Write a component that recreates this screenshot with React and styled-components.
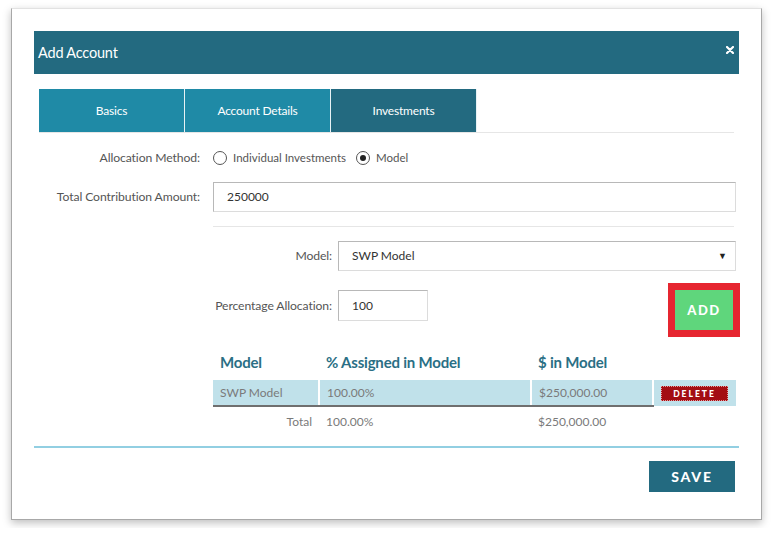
import styled, { createGlobalStyle } from 'styled-components';

const GlobalStyle = createGlobalStyle`
	html, body {
		margin: 0;
		background: #ffffff;
	}
	body {
		padding: 8px 11px;
		font-family: Lato, 'Open Sans', sans-serif;
		color: #555;
	}
`;

const Card = styled.div`
	width: 751px;
	height: 512px;
	box-sizing: border-box;
	padding: 22px 22px 0;
	background: #fff;
	border: 1px solid #a8a8a8;
	border-top-color: #e2e2e2;
	box-shadow: 0 3px 8px rgba(0, 0, 0, 0.25);
	display: flex;
	flex-direction: column;
`;

const Header = styled.div`
	height: 43px;
	background: #236a80;
	display: flex;
	align-items: center;
	justify-content: space-between;
	padding: 0 5px 0 4px;
	color: #fff;
	font-size: 14.5px;
	letter-spacing: -0.2px;
`;

const Close = styled.span`
	display: flex;
	margin-top: -6px;
`;

const Body = styled.div`
	padding: 15px 5px 0;
`;

const TabBar = styled.div`
	display: flex;
	border-bottom: 1px solid #e6e6e6;
`;

const Tab = styled.div`
	width: 145px;
	height: 43px;
	display: flex;
	align-items: center;
	justify-content: center;
	background: ${({ $active }) => ($active ? '#236a80' : '#1f8aa6')};
	color: #fff;
	font-size: 12px;
	border-right: 1px solid #e8f2f5;
	letter-spacing: -0.2px;
`;

const Row = styled.div`
	display: flex;
	align-items: ${({ $align }) => $align || 'center'};
	gap: ${({ $gap }) => $gap || 13}px;
	margin-top: ${({ $top }) => $top || 0}px;
`;

const Label = styled.div`
	width: ${({ $w }) => $w || 161}px;
	line-height: 31px;
	text-align: right;
	font-size: 12.2px;
	color: #555;
	flex-shrink: 0;
	letter-spacing: -0.1px;
`;

const RadioGroup = styled.div`
	display: flex;
	align-items: center;
	gap: 6px;
	font-size: 11.5px;
	color: #555;
`;

const Radio = styled.span`
	width: 12px;
	height: 12px;
	border-radius: 50%;
	border: 1.5px solid #555;
	display: inline-flex;
	align-items: center;
	justify-content: center;
	margin-left: ${({ $gapLeft }) => $gapLeft || 0}px;
	&::after {
		content: '';
		width: 6px;
		height: 6px;
		border-radius: 50%;
		background: ${({ $checked }) => ($checked ? '#222' : 'transparent')};
	}
`;

const Input = styled.div`
	box-sizing: border-box;
	width: ${({ $w }) => $w || 523}px;
	height: ${({ $h }) => $h || 30}px;
	flex-shrink: 0;
	border: 1px solid #dcdcdc;
	border-top-color: #b8b8b8;
	border-left-color: #b8b8b8;
	padding: 0 13px;
	display: flex;
	align-items: center;
	justify-content: space-between;
	font-size: 12px;
	color: #333;
`;

const Caret = styled.span`
	font-size: 9px;
	color: #222;
	margin-right: -5px;
`;

const Section = styled.div`
	margin-left: 174px;
	border-top: 1px solid #e6e6e6;
	margin-top: 14px;
	padding-top: 13px;
`;

const AddButton = styled.button`
	margin-left: auto;
	margin-right: 1px;
	width: 58px;
	height: 40px;
	border: none;
	background: #5fd67c;
	outline: 7px solid #e62630;
	color: #fff;
	font-family: Lato, sans-serif;
	font-weight: 900;
	font-size: 13px;
	letter-spacing: 1.5px;
`;

const Table = styled.table`
	margin-top: 23px;
	width: 523px;
	border-collapse: collapse;
	font-size: 12px;
`;

const Th = styled.th`
	text-align: left;
	font-weight: 700;
	font-size: 15px;
	color: #2a6f85;
	padding: 0 7px 9px;
	letter-spacing: -0.2px;
`;

const Td = styled.td`
	height: ${({ $h }) => $h || 25}px;
	padding: 0 7px;
	color: #7a7a7a;
	background: ${({ $fill }) => ($fill ? '#c0e1ea' : 'transparent')};
	border-left: ${({ $fill }) => ($fill ? '2px solid #fff' : 'none')};
	border-bottom: ${({ $line }) => ($line ? '2px solid #6f6f6f' : 'none')};
	text-align: ${({ $right }) => ($right ? 'right' : 'left')};
	&:first-child {
		border-left: none;
	}
`;

const DeleteButton = styled.span`
	display: inline-flex;
	align-items: center;
	justify-content: center;
	width: 67px;
	height: 15px;
	box-sizing: border-box;
	background: #a30d12;
	border: 1px dotted #e89a9a;
	color: #fff;
	font-weight: 900;
	font-size: 8.5px;
	letter-spacing: 2px;
`;

const Footer = styled.div`
	border-top: 2px solid #92cfe2;
	display: flex;
	justify-content: flex-end;
	padding: 13px 4px 0 0;
	margin-top: 10px;
`;

const SaveButton = styled.button`
	width: 86px;
	height: 31px;
	border: none;
	background: #236a80;
	color: #fff;
	font-family: Lato, sans-serif;
	font-weight: 900;
	font-size: 14px;
	letter-spacing: 1.8px;
`;

const CloseIcon = () => (
	<svg width="8" height="8" viewBox="0 0 8 8">
		<path d="M1 1 L7 7 M7 1 L1 7" stroke="#fff" strokeWidth="2.2" strokeLinecap="round" />
	</svg>
);

export default function App() {
	return (
		<>
			<GlobalStyle />
			<Card>
				<Header>
					Add Account
					<Close>
						<CloseIcon />
					</Close>
				</Header>
				<Body>
					<TabBar>
						<Tab>Basics</Tab>
						<Tab>Account Details</Tab>
						<Tab $active>Investments</Tab>
					</TabBar>
					<Row $top={9}>
						<Label>Allocation Method:</Label>
						<RadioGroup>
							<Radio />
							Individual Investments
							<Radio $checked $gapLeft={4} />
							Model
						</RadioGroup>
					</Row>
					<Row $top={8}>
						<Label>Total Contribution Amount:</Label>
						<Input>250000</Input>
					</Row>
					<Section>
						<Row $gap={6}>
							<Label $w={119}>Model:</Label>
							<Input $w={398}>
								SWP Model
								<Caret>▼</Caret>
							</Input>
						</Row>
						<Row $gap={6} $top={19} $align="flex-start">
							<Label $w={119}>Percentage Allocation:</Label>
							<Input $w={90} $h={31}>100</Input>
							<AddButton>ADD</AddButton>
						</Row>
						<Table>
							<colgroup>
								<col style={{ width: 106 }} />
								<col style={{ width: 212 }} />
								<col style={{ width: 122 }} />
								<col style={{ width: 83 }} />
							</colgroup>
							<thead>
								<tr>
									<Th>Model</Th>
									<Th>% Assigned in Model</Th>
									<Th>$ in Model</Th>
									<Th />
								</tr>
							</thead>
							<tbody>
								<tr>
									<Td $fill $line>SWP Model</Td>
									<Td $fill $line>100.00%</Td>
									<Td $fill $line>$250,000.00</Td>
									<Td $fill>
										<DeleteButton>DELETE</DeleteButton>
									</Td>
								</tr>
								<tr>
									<Td $right $h={29}>Total</Td>
									<Td $h={29}>100.00%</Td>
									<Td $h={29}>$250,000.00</Td>
									<Td $h={29} />
								</tr>
							</tbody>
						</Table>
					</Section>
				</Body>
				<Footer>
					<SaveButton>SAVE</SaveButton>
				</Footer>
			</Card>
		</>
	);
}
